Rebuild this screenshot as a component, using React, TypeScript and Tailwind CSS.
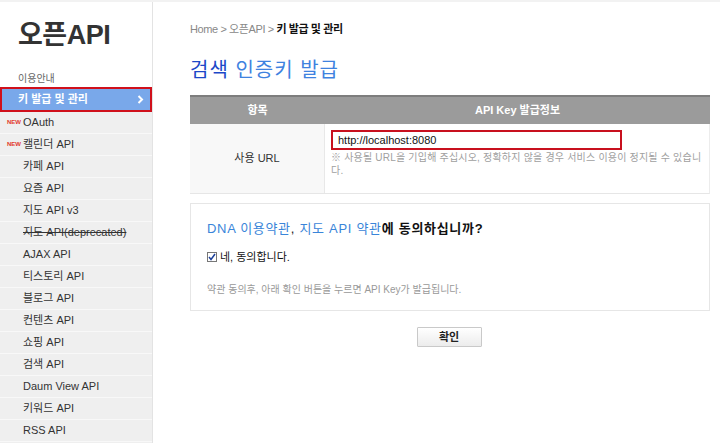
import React from "react";

const font = { fontFamily: '"Liberation Sans", "Noto Sans CJK KR", sans-serif' };

const items: { label: string; isNew?: boolean; strike?: boolean }[] = [
  { label: "OAuth", isNew: true },
  { label: "캘린더 API", isNew: true },
  { label: "카페 API" },
  { label: "요즘 API" },
  { label: "지도 API v3" },
  { label: "지도 API(deprecated)", strike: true },
  { label: "AJAX API" },
  { label: "티스토리 API" },
  { label: "블로그 API" },
  { label: "컨텐츠 API" },
  { label: "쇼핑 API" },
  { label: "검색 API" },
  { label: "Daum View API" },
  { label: "키워드 API" },
  { label: "RSS API" },
];

export default function App() {
  return (
    <div
      className="w-[720px] h-[443px] overflow-hidden bg-white flex border-t-2 border-[#f2f2f2]"
      style={font}
    >
      {/* Sidebar */}
      <div className="w-[153px] shrink-0 border-r border-[#e3e3e3] flex flex-col">
        <div className="h-[85px] flex flex-col pl-[18px]">
          <div className="mt-[17px] text-[27px] font-bold leading-[32px] text-[#333] tracking-[-0.5px]">
            오픈API
          </div>
          <div className="mt-[22px] text-[10px] leading-[12px] text-[#666]">이용안내</div>
        </div>
        <div className="h-[25px] border-2 border-[#d0101b] bg-[#79a8ea] flex items-center justify-between pl-[16px] pr-[6px]">
          <span className="text-[11px] font-bold text-white">키 발급 및 관리</span>
          <svg width="7" height="9" viewBox="0 0 7 9">
            <path d="M1.5 1 L5 4.5 L1.5 8" stroke="white" strokeWidth="2" fill="none" />
          </svg>
        </div>
        <div className="flex-1 bg-[#efefef]">
          {items.map((it) => (
            <div
              key={it.label}
              className="h-[22px] border-b border-[#f8f8f8] flex items-center relative pl-[23px]"
            >
              {it.isNew && (
                <span className="absolute left-[7px] top-[7px] text-[6px] leading-[7px] font-bold text-[#e2382b]">
                  NEW
                </span>
              )}
              <span
                className={
                  "text-[11px] text-[#333] " + (it.strike ? "line-through" : "")
                }
              >
                {it.label}
              </span>
            </div>
          ))}
        </div>
      </div>

      {/* Main */}
      <div className="flex-1 pl-[37px] pr-[10px]">
        <div className="mt-[20px] text-[11px] leading-[14px] text-[#888] tracking-[-0.4px]">
          Home &gt; 오픈API &gt; <span className="font-bold text-[#111]">키 발급 및 관리</span>
        </div>
        <div className="mt-[22px] text-[20px] leading-[24px] tracking-[1px]">
          <span className="text-[#1c48c8]">검색</span>{" "}
          <span className="text-[#3f82df]">인증키 발급</span>
        </div>

        {/* Table */}
        <div className="mt-[13px] w-[520px]">
          <div className="h-[29px] flex bg-[#9b9b9b] border-t-2 border-[#7d7d7d] text-white text-[11px] font-bold">
            <div className="w-[135px] flex items-center justify-center">항목</div>
            <div className="flex-1 flex items-center justify-center">API Key 발급정보</div>
          </div>
          <div className="h-[70px] flex border-b border-[#e6e6e6] border-r border-r-[#ececec]">
            <div className="w-[135px] bg-[#f8f8f8] border-r border-[#e8e8e8] flex items-center justify-center text-[11px] text-[#333]">
              사용 URL
            </div>
            <div className="flex-1 pl-[6px] pt-[6px]">
              <div className="w-[291px] h-[20px] border-2 border-[#c8101e] flex items-center pl-[5px] text-[11px] text-[#111]">
                http://localhost:8080
              </div>
              <div className="mt-[1px] text-[10px] leading-[13px] text-[#a0a0a0] tracking-[0.2px]">
                ※ 사용될 URL을 기입해 주십시오, 정확하지 않을 경우 서비스 이용이 정지될 수 있습니
                <br />
                다.
              </div>
            </div>
          </div>
        </div>

        {/* Agreement */}
        <div className="mt-[9px] w-[520px] h-[108px] border border-[#e6e6e6] pl-[16px] pt-[16px]">
          <div className="text-[13px] leading-[18px] tracking-[0.7px]">
            <span className="text-[#3a85d9]">DNA 이용약관</span>
            <span className="text-[#222]">, </span>
            <span className="text-[#3a85d9]">지도 API 약관</span>
            <span className="text-[#111] font-bold">에 동의하십니까?</span>
          </div>
          <div className="mt-[11px] flex items-center gap-[3px]">
            <span className="w-[10px] h-[10px] border border-[#777] bg-white flex items-center justify-center">
              <svg width="8" height="8" viewBox="0 0 8 8">
                <path d="M1 4 L3 6.5 L7 1" stroke="#1b3f9a" strokeWidth="1.5" fill="none" />
              </svg>
            </span>
            <span className="text-[11px] text-[#111]">네, 동의합니다.</span>
          </div>
          <div className="mt-[16px] text-[10px] text-[#999]">
            약관 동의후, 아래 확인 버튼을 누르면 API Key가 발급됩니다.
          </div>
        </div>

        <div className="mt-[16px] w-[520px] flex justify-center pr-[2px]">
          <button className="w-[65px] h-[20px] border border-[#c9c9c9] bg-gradient-to-b from-white to-[#ececec] text-[11px] font-bold text-[#222] flex items-center justify-center rounded-[1px]">
            확인
          </button>
        </div>
      </div>
    </div>
  );
}
